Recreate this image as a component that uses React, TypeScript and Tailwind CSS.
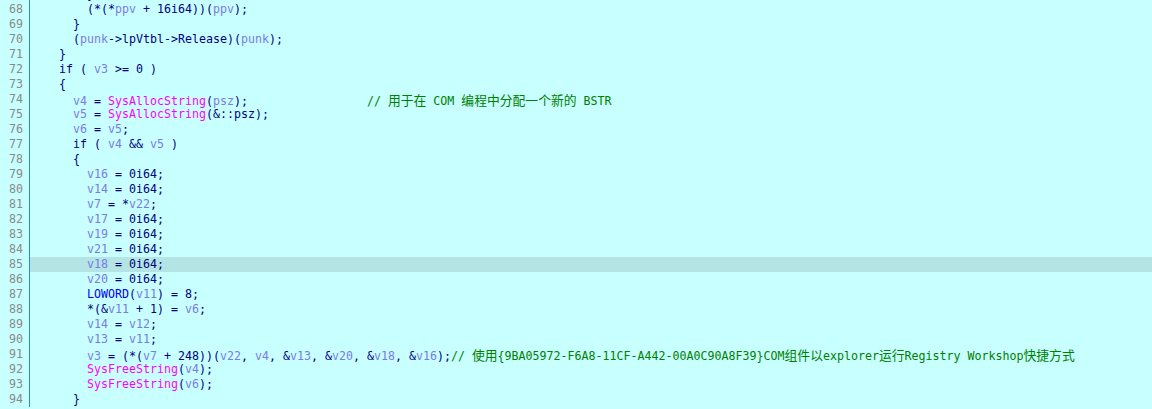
import React from "react";

type Seg = [string, string];

const C: Record<string, string> = {
  k: "text-[#000080]",
  v: "text-[#7b7be6]",
  f: "text-[#ff00ff]",
  m: "text-[#0000ff]",
  c: "text-[#008000]",
};

const k = (t: string): Seg => ["k", t];
const v = (t: string): Seg => ["v", t];
const f = (t: string): Seg => ["f", t];
const m = (t: string): Seg => ["m", t];
const c = (t: string): Seg => ["c", t];

const sp = (n: number) => " ".repeat(n);

const lines: { n: number; segs: Seg[]; hl?: boolean }[] = [
  { n: 67, segs: [k(sp(6) + "}")] },
  { n: 68, segs: [k(sp(6) + "(*(*"), v("ppv"), k(" + 16i64))("), v("ppv"), k(");")] },
  { n: 69, segs: [k(sp(4) + "}")] },
  { n: 70, segs: [k(sp(4) + "("), v("punk"), k("->lpVtbl->Release)("), v("punk"), k(");")] },
  { n: 71, segs: [k(sp(2) + "}")] },
  { n: 72, segs: [k(sp(2) + "if ( "), v("v3"), k(" >= 0 )")] },
  { n: 73, segs: [k(sp(2) + "{")] },
  {
    n: 74,
    segs: [
      k(sp(4)),
      v("v4"),
      k(" = "),
      f("SysAllocString"),
      k("("),
      v("psz"),
      k(");" + sp(17)),
      c("// 用于在 COM 编程中分配一个新的 BSTR"),
    ],
  },
  { n: 75, segs: [k(sp(4)), v("v5"), k(" = "), f("SysAllocString"), k("(&::psz);")] },
  { n: 76, segs: [k(sp(4)), v("v6"), k(" = "), v("v5"), k(";")] },
  { n: 77, segs: [k(sp(4) + "if ( "), v("v4"), k(" && "), v("v5"), k(" )")] },
  { n: 78, segs: [k(sp(4) + "{")] },
  { n: 79, segs: [k(sp(6)), v("v16"), k(" = 0i64;")] },
  { n: 80, segs: [k(sp(6)), v("v14"), k(" = 0i64;")] },
  { n: 81, segs: [k(sp(6)), v("v7"), k(" = *"), v("v22"), k(";")] },
  { n: 82, segs: [k(sp(6)), v("v17"), k(" = 0i64;")] },
  { n: 83, segs: [k(sp(6)), v("v19"), k(" = 0i64;")] },
  { n: 84, segs: [k(sp(6)), v("v21"), k(" = 0i64;")] },
  { n: 85, segs: [k(sp(6)), v("v18"), k(" = 0i64;")], hl: true },
  { n: 86, segs: [k(sp(6)), v("v20"), k(" = 0i64;")] },
  { n: 87, segs: [k(sp(6)), m("LOWORD"), k("("), v("v11"), k(") = 8;")] },
  { n: 88, segs: [k(sp(6) + "*(&"), v("v11"), k(" + 1) = "), v("v6"), k(";")] },
  { n: 89, segs: [k(sp(6)), v("v14"), k(" = "), v("v12"), k(";")] },
  { n: 90, segs: [k(sp(6)), v("v13"), k(" = "), v("v11"), k(";")] },
  {
    n: 91,
    segs: [
      k(sp(6)),
      v("v3"),
      k(" = (*("),
      v("v7"),
      k(" + 248))("),
      v("v22"),
      k(", "),
      v("v4"),
      k(", &"),
      v("v13"),
      k(", &"),
      v("v20"),
      k(", &"),
      v("v18"),
      k(", &"),
      v("v16"),
      k(");"),
      c("// 使用{9BA05972-F6A8-11CF-A442-00A0C90A8F39}COM组件以explorer运行Registry Workshop快捷方式"),
    ],
  },
  { n: 92, segs: [k(sp(6)), f("SysFreeString"), k("("), v("v4"), k(");")] },
  { n: 93, segs: [k(sp(6)), f("SysFreeString"), k("("), v("v6"), k(");")] },
  { n: 94, segs: [k(sp(4) + "}")] },
];

function renderText(text: string, key: string) {
  const parts = text.split(/([\u4e00-\u9fff]+)/);
  return parts.map((p, i) =>
    /[\u4e00-\u9fff]/.test(p) ? (
      <span
        key={key + "-" + i}
        className="text-[12.8px] [font-family:'Noto_Sans_CJK_SC',sans-serif]"
      >
        {p}
      </span>
    ) : (
      <React.Fragment key={key + "-" + i}>{p}</React.Fragment>
    )
  );
}

export default function App() {
  return (
    <div className="w-[1152px] h-[409px] overflow-hidden bg-[#c8ffff] text-[11.63px] [font-family:'DejaVu_Sans_Mono',monospace]">
      <div className="-mt-[13px] flex flex-col">
        {lines.map((ln) => (
          <div key={ln.n} className="flex h-[15px] leading-[15px]">
            <div className="w-[29px] shrink-0 pr-[6px] text-right text-[#8a8a8a]">
              {ln.n === 67 ? "" : ln.n}
            </div>
            <div
              className={
                "flex-1 border-l border-[#2e86d6] pl-[15px] whitespace-pre " +
                (ln.hl ? "bg-[#b4e4e4]" : "")
              }
            >
              {ln.segs.map((s, i) => (
                <span key={i} className={C[s[0]]}>
                  {renderText(s[1], ln.n + "-" + i)}
                </span>
              ))}
            </div>
          </div>
        ))}
      </div>
    </div>
  );
}
